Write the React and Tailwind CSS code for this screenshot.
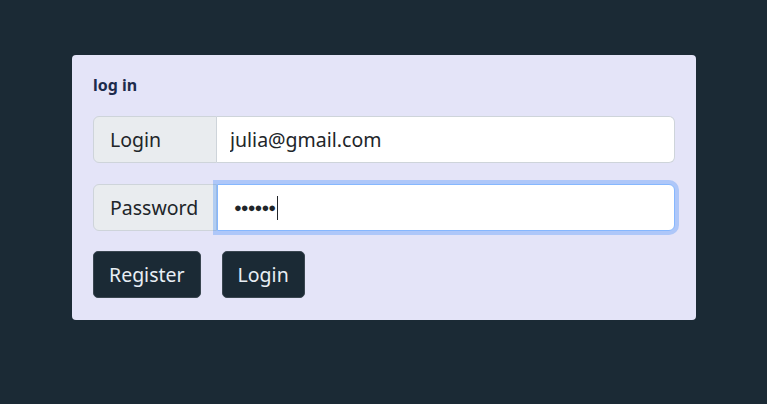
import React from 'react';

export default function App() {
    return (
        <div className="min-h-screen w-full bg-[#1b2a35] pt-[55px] pl-[72px] font-['Noto_Sans',sans-serif]">
            <div className="w-[624px] h-[265px] bg-[#e4e4f8] rounded-[4px] px-[21px] pt-[19px]">
                <h1 className="text-[16px] font-bold text-[#1d2b4c] leading-[22px]">log in</h1>

                {/* Login row */}
                <div className="mt-[20px] flex h-[47px] w-[582px] text-[19.5px] text-[#212529]">
                    <span className="w-[124px] shrink-0 flex items-center pl-[16px] bg-[#e9ecef] border border-[#ced4da] rounded-l-[6px]">Login</span>
                    <input
                        className="flex-1 min-w-0 bg-white border border-l-0 border-[#ced4da] rounded-r-[6px] pl-[13px] outline-none"
                        defaultValue="julia@gmail.com"
                        readOnly
                    />
                </div>

                {/* Password row */}
                <div className="mt-[21px] flex h-[47px] w-[582px] text-[19.5px] text-[#212529]">
                    <span className="w-[124px] shrink-0 flex items-center pl-[16px] bg-[#e9ecef] border border-[#ced4da] rounded-l-[6px]">Password</span>
                    <div className="flex-1 min-w-0 flex items-center bg-white border border-[#86b7fe] rounded-r-[6px] pl-[16px] shadow-[0_0_0_4px_rgba(13,110,253,0.25)] relative z-10">
                        <span className="text-[13px] tracking-[-1px] text-[#212529]">●●●●●●</span>
                        <span className="ml-[2px] w-px h-[24px] bg-[#212529]"></span>
                    </div>
                </div>

                {/* Buttons */}
                <div className="mt-[20px] flex gap-[21px] text-[19.5px]">
                    <button className="h-[47px] px-[15px] bg-[#1b2a35] text-[#e8eef4] border border-[#3a4650] rounded-[5px]">Register</button>
                    <button className="h-[47px] px-[15px] bg-[#1b2a35] text-[#e8eef4] border border-[#3a4650] rounded-[5px]">Login</button>
                </div>
            </div>
        </div>
    );
}
